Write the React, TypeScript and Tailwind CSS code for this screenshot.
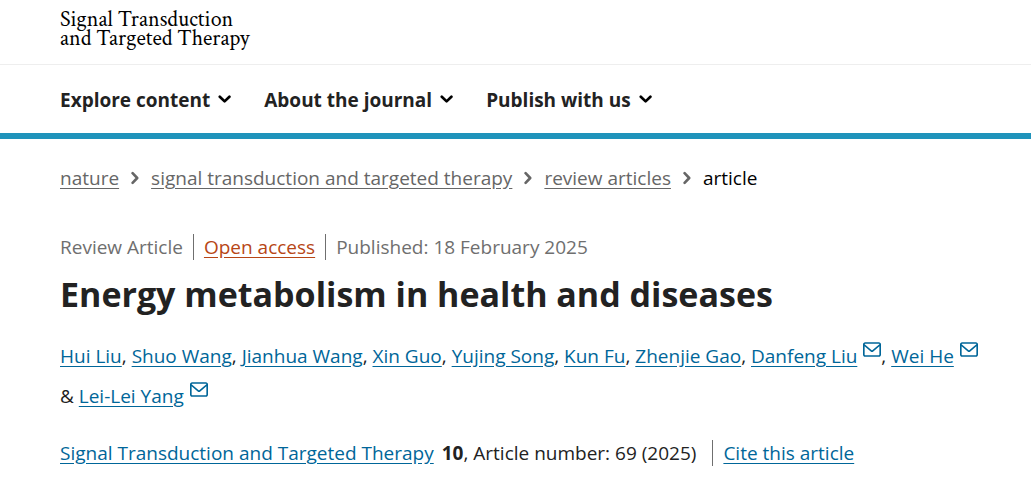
import { Fragment } from "react";

type Author = {
  name: string;
  corresponding?: boolean;
};

const menuItems = ["Explore content", "About the journal", "Publish with us"];

const breadcrumbs = [
  "nature",
  "signal transduction and targeted therapy",
  "review articles",
];

const authors: Author[] = [
  { name: "Hui Liu" },
  { name: "Shuo Wang" },
  { name: "Jianhua Wang" },
  { name: "Xin Guo" },
  { name: "Yujing Song" },
  { name: "Kun Fu" },
  { name: "Zhenjie Gao" },
  { name: "Danfeng Liu", corresponding: true },
  { name: "Wei He", corresponding: true },
  { name: "Lei-Lei Yang", corresponding: true },
];

function ChevronDown() {
  return (
    <svg
      className="w-3.5 h-2.5 text-black"
      viewBox="0 0 14 10"
      fill="none"
      stroke="currentColor"
      strokeWidth="2.7"
      strokeLinecap="round"
      strokeLinejoin="round"
      aria-hidden="true"
    >
      <path d="M1.8 1.8 6.6 6.4 11.4 1.8" />
    </svg>
  );
}

function ChevronRight() {
  return (
    <svg
      className="w-2 h-3.5 text-[#666666]"
      viewBox="0 0 8 14"
      fill="none"
      stroke="currentColor"
      strokeWidth="2.6"
      strokeLinecap="round"
      strokeLinejoin="round"
      aria-hidden="true"
    >
      <path d="M1.6 2.2 6.2 7 1.6 11.8" />
    </svg>
  );
}

function Envelope() {
  return (
    <svg
      className="inline-block w-[18px] h-[15px] ml-1.5 -mt-4 align-middle"
      viewBox="0 0 22 18"
      fill="currentColor"
      aria-hidden="true"
    >
      <path d="m19.462 0c1.413 0 2.538 1.184 2.538 2.619v12.762c0 1.435-1.125 2.619-2.538 2.619h-16.924c-1.413 0-2.538-1.184-2.538-2.619v-12.762c0-1.435 1.125-2.619 2.538-2.619zm.538 5.158-7.378 6.258a2.549 2.549 0 0 1-3.253-.008l-7.369-6.248v10.222c0 .353.253.619.538.619h16.924c.285 0 .538-.266.538-.619zm-.538-3.158h-16.924c-.264 0-.5.228-.534.542l8.65 7.334c.2.165.492.165.684.007l8.656-7.342-.001-.025c-.044-.3-.274-.516-.531-.516z" />
    </svg>
  );
}

function AuthorLink({ author }: { author: Author }) {
  return (
    <a href="#" className="text-[#006699]">
      <span className="underline underline-offset-3">{author.name}</span>
      {author.corresponding && <Envelope />}
    </a>
  );
}

export default function App() {
  const listed = authors.slice(0, -1);
  const last = authors[authors.length - 1];

  return (
    <div className="bg-white text-[#222222] font-['Segoe_UI','Open_Sans',sans-serif] text-[19px] leading-7">
      <header className="border-b-6 border-[#1f93bb]">
        <div className="px-[60px] pt-2.5 pb-4 border-b border-[#eeeeee]">
          <a
            href="#"
            className="block w-fit text-black font-['Crimson_Text','Liberation_Serif',serif] text-[22px] leading-[19px]"
          >
            Signal Transduction
            <br />
            and Targeted Therapy
          </a>
        </div>
        <nav className="flex flex-wrap gap-x-8 px-[60px] pt-[21px] pb-[19px]">
          {menuItems.map((item) => (
            <button
              key={item}
              type="button"
              className="flex items-center gap-2 font-bold cursor-pointer"
            >
              {item}
              <ChevronDown />
            </button>
          ))}
        </nav>
      </header>

      <main className="pl-[60px] pr-10">
        <nav aria-label="Breadcrumb" className="pt-[25px]">
          <ol className="flex flex-wrap items-center gap-x-3">
            {breadcrumbs.map((crumb) => (
              <li key={crumb} className="flex items-center gap-x-3">
                <a
                  href="#"
                  className="text-[#666666] underline underline-offset-3"
                >
                  {crumb}
                </a>
                <ChevronRight />
              </li>
            ))}
            <li className="text-black">article</li>
          </ol>
        </nav>

        <article className="pt-[42px]">
          <ul className="flex flex-wrap leading-[26px] text-[#6f6f6f]">
            <li className="pr-2.5 border-r border-[#6f6f6f]">Review Article</li>
            <li className="px-2.5 border-r border-[#6f6f6f]">
              <a
                href="#"
                className="text-[#b74616] underline underline-offset-3"
              >
                Open access
              </a>
            </li>
            <li className="pl-2.5">
              Published: <time dateTime="2025-02-18">18 February 2025</time>
            </li>
          </ul>

          <h1 className="pt-2.5 pb-0.5 text-[34px] leading-12 font-bold">
            Energy metabolism in health and diseases
          </h1>

          <p className="pt-4 leading-10">
            {listed.map((author, i) => (
              <Fragment key={author.name}>
                <span className="whitespace-nowrap">
                  <AuthorLink author={author} />
                  {i < listed.length - 1 && ","}
                </span>{" "}
              </Fragment>
            ))}
            <span className="whitespace-nowrap">
              &amp; <AuthorLink author={last} />
            </span>
          </p>

          <p className="flex flex-wrap pt-6 leading-[26px]">
            <span className="pr-4">
              <a
                href="#"
                className="mr-2 text-[#006699] underline underline-offset-3"
              >
                Signal Transduction and Targeted Therapy
              </a>
              <b>10</b>, Article number: 69 (2025)
            </span>
            <span className="pl-2.5 border-l border-[#6f6f6f]">
              <a
                href="#"
                className="text-[#006699] underline underline-offset-3"
              >
                Cite this article
              </a>
            </span>
          </p>
        </article>
      </main>
    </div>
  );
}
